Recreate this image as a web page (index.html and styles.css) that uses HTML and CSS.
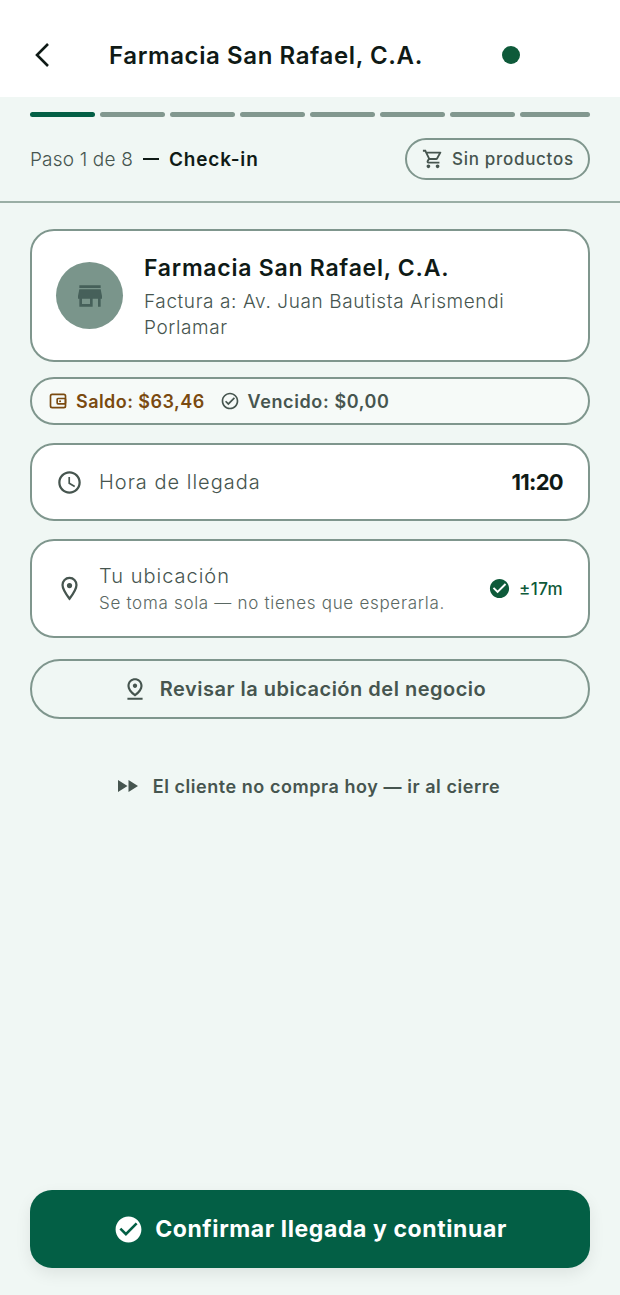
FILE: index.html
```html
<!DOCTYPE html>
<html lang="es">
<head>
    <meta charset="UTF-8">
    <meta name="viewport" content="width=device-width, initial-scale=1.0">
    <title>Check-in - Farmacia San Rafael</title>
    <link rel="stylesheet" href="styles.css">
</head>
<body>
    <div class="page">
        <header class="topbar">
            <svg class="back-icon" viewBox="0 0 18 28"><path d="M15 3 4 14l11 11" fill="none" stroke="currentColor" stroke-width="2.6"/></svg>
            <h1>Farmacia San Rafael, C.A.</h1>
            <span class="status-dot"></span>
        </header>

        <div class="progress">
            <span class="step active"></span>
            <span class="step"></span>
            <span class="step"></span>
            <span class="step"></span>
            <span class="step"></span>
            <span class="step"></span>
            <span class="step"></span>
            <span class="step"></span>
        </div>

        <div class="step-row">
            <div class="step-label">
                <span class="step-count">Paso 1 de 8</span>
                <span class="step-dash"></span>
                <strong>Check-in</strong>
            </div>
            <div class="products-pill">
                <svg viewBox="0 0 24 24"><path d="M15.55 13c.75 0 1.41-.41 1.75-1.03l3.58-6.49A.996.996 0 0 0 20.01 4H5.21l-.94-2H1v2h2l3.6 7.59-1.35 2.44C4.52 15.37 5.48 17 7 17h12v-2H7l1.1-2h7.45zM6.16 6h12.15l-2.76 5H8.53L6.16 6zM7 18c-1.1 0-1.99.9-1.99 2S5.9 22 7 22s2-.9 2-2-.9-2-2-2zm10 0c-1.1 0-1.99.9-1.99 2s.89 2 1.99 2 2-.9 2-2-.9-2-2-2z"/></svg>
                Sin productos
            </div>
        </div>

        <main class="content">
            <section class="card client-card">
                <div class="avatar">
                    <svg viewBox="0 0 24 24"><path d="M20 4H4v2h16V4zm1 10v-2l-1-5H4l-1 5v2h1v6h10v-6h4v6h2v-6h1zm-9 4H6v-4h6v4z"/></svg>
                </div>
                <div class="client-info">
                    <h2>Farmacia San Rafael, C.A.</h2>
                    <p>Factura a: Av. Juan Bautista Arismendi Porlamar</p>
                </div>
            </section>

            <section class="balance-pill">
                <span class="balance due">
                    <svg viewBox="0 0 24 24"><rect x="3" y="4" width="18" height="16" rx="2" fill="none" stroke="currentColor" stroke-width="2"/><rect x="11" y="9" width="10" height="6.5" rx="1" fill="none" stroke="currentColor" stroke-width="2"/><circle cx="14.5" cy="12.2" r="1.2"/></svg>
                    Saldo: $63,46
                </span>
                <span class="balance overdue">
                    <svg viewBox="0 0 24 24"><path d="M12 2C6.48 2 2 6.48 2 12s4.48 10 10 10 10-4.48 10-10S17.52 2 12 2zm0 18c-4.42 0-8-3.58-8-8s3.58-8 8-8 8 3.58 8 8-3.58 8-8 8zm4.59-12.42L10 14.17l-2.59-2.58L6 13l4 4 8-8z"/></svg>
                    Vencido: $0,00
                </span>
            </section>

            <section class="card time-card">
                <svg class="row-icon" viewBox="0 0 24 24"><path d="M11.99 2C6.47 2 2 6.48 2 12s4.47 10 9.99 10C17.52 22 22 17.52 22 12S17.52 2 11.99 2zM12 20c-4.42 0-8-3.58-8-8s3.58-8 8-8 8 3.58 8 8-3.58 8-8 8zm.5-13H11v6l5.25 3.15.75-1.23-4.5-2.67z"/></svg>
                <span class="row-title">Hora de llegada</span>
                <span class="time-value">11:20</span>
            </section>

            <section class="card location-card">
                <svg class="row-icon" viewBox="0 0 24 24"><path d="M12 2.6c-3.6 0-6.2 2.7-6.2 6.3 0 3.6 3 8 6.2 12.2 3.2-4.2 6.2-8.6 6.2-12.2 0-3.6-2.600-6.300-6.200-6.300z" fill="none" stroke="currentColor" stroke-width="2"/><circle cx="12" cy="9.4" r="2.3"/></svg>
                <div class="location-text">
                    <span class="row-title">Tu ubicación</span>
                    <span class="row-note">Se toma sola — no tienes que esperarla.</span>
                </div>
                <span class="accuracy">
                    <svg viewBox="0 0 24 24"><path d="M12 2C6.48 2 2 6.48 2 12s4.48 10 10 10 10-4.48 10-10S17.52 2 12 2zm-2 15-5-5 1.41-1.41L10 14.17l7.59-7.59L19 8l-9 9z"/></svg>
                    ±17m
                </span>
            </section>

            <button class="review-btn">
                <svg viewBox="0 0 24 24"><path d="M12 4c1.93 0 5 1.4 5 5.15 0 2.16-1.72 4.67-5 7.32-3.28-2.65-5-5.17-5-7.32C7 5.4 10.07 4 12 4m0-2C8.73 2 5 4.46 5 9.15c0 3.12 2.33 6.41 7 9.85 4.67-3.44 7-6.73 7-9.85C19 4.46 15.27 2 12 2zm0 5c-1.1 0-2 .9-2 2s.9 2 2 2 2-.9 2-2-.9-2-2-2zm7 13H5v2h14v-2z"/></svg>
                Revisar la ubicación del negocio
            </button>

            <a class="skip-link" href="#">
                <svg viewBox="0 0 24 24"><path d="M2 18l9.5-6L2 6v12zm10.5-12v12l9.5-6-9.5-6z"/></svg>
                El cliente no compra hoy — ir al cierre
            </a>

            <button class="confirm-btn">
                <svg viewBox="0 0 24 24"><path d="M12 2C6.48 2 2 6.48 2 12s4.48 10 10 10 10-4.48 10-10S17.52 2 12 2zm-2 15-5-5 1.41-1.41L10 14.17l7.59-7.59L19 8l-9 9z"/></svg>
                Confirmar llegada y continuar
            </button>
        </main>
    </div>
</body>
</html>
```

FILE: styles.css
```css
* {
    box-sizing: border-box;
}

body {
    font-family: 'Inter', 'Liberation Sans', sans-serif;
    background-color: #f0f7f4;
    color: #0f1a16;
    margin: 0;
}

svg {
    fill: currentColor;
    flex-shrink: 0;
}

.page {
    display: flex;
    flex-direction: column;
    min-height: 1295px;
}

.topbar {
    background-color: white;
    height: 97px;
    padding: 13px 0 0 33px;
    display: flex;
    align-items: center;
}

.back-icon {
    width: 18px;
    height: 28px;
}

.topbar h1 {
    font-size: 24px;
    font-weight: 600;
    letter-spacing: 0.6px;
    margin: 0 0 0 58px;
    width: 393px;
}

.status-dot {
    width: 18px;
    height: 18px;
    border-radius: 50%;
    background-color: #0e5a3a;
}

.progress {
    display: flex;
    gap: 5px;
    padding: 15px 30px 0;
}

.step {
    width: 65px;
    height: 5px;
    border-radius: 3px;
    background-color: #82988f;
}

.step:last-child {
    flex: 1;
}

.step.active {
    background-color: #035f45;
}

.step-row {
    display: flex;
    justify-content: space-between;
    align-items: center;
    margin-top: 21px;
    padding: 0 30px 21px;
    border-bottom: 2px solid #9aaea5;
}

.step-label {
    display: flex;
    align-items: center;
    font-size: 19px;
}

.step-count {
    color: #46554f;
    font-weight: 300;
    letter-spacing: 0.18px;
}

.step-dash {
    width: 16px;
    height: 2px;
    background-color: #0f1a16;
    margin: 0 10px;
}

.step-label strong {
    font-weight: 600;
    letter-spacing: 0.8px;
}

.products-pill {
    display: flex;
    align-items: center;
    gap: 8px;
    width: 185px;
    height: 42px;
    padding-left: 15px;
    border: 2px solid #7f968d;
    border-radius: 21px;
    color: #46554f;
    font-size: 17px;
    font-weight: 500;
    letter-spacing: 0.7px;
}

.products-pill svg {
    width: 22px;
    height: 22px;
}

.content {
    flex: 1;
    display: flex;
    flex-direction: column;
    padding: 26px 30px 27px;
}

.card {
    background-color: white;
    border: 2px solid #7f968d;
    border-radius: 24px;
    display: flex;
    align-items: center;
}

.client-card {
    height: 133px;
    padding: 0 24px;
    gap: 21px;
}

.avatar {
    width: 67px;
    height: 67px;
    border-radius: 50%;
    background-color: #7a958b;
    color: #46605a;
    display: flex;
    align-items: center;
    justify-content: center;
    flex-shrink: 0;
}

.avatar svg {
    width: 32px;
    height: 32px;
}

.client-info {
    padding-top: 3px;
}

.client-info h2 {
    font-size: 23px;
    font-weight: 600;
    letter-spacing: 0.75px;
    margin: 0 0 7px;
}

.client-info p {
    font-size: 19px;
    line-height: 26px;
    letter-spacing: 0.6px;
    color: #46554f;
    margin: 0;
    font-weight: 300;
    width: 380px;
}

.balance-pill {
    display: flex;
    align-items: center;
    gap: 15px;
    height: 48px;
    margin-top: 15px;
    padding: 0 16px;
    background-color: #f6faf8;
    border: 2px solid #7f968d;
    border-radius: 24px;
    font-size: 18px;
    font-weight: 600;
}

.balance {
    display: flex;
    align-items: center;
    gap: 8px;
    letter-spacing: 0.45px;
}

.balance svg {
    width: 20px;
    height: 20px;
}

.balance.due {
    color: #7a4a10;
}

.balance.overdue {
    color: #46554f;
    letter-spacing: 0.6px;
}

.time-card {
    height: 78px;
    margin-top: 18px;
    padding: 0 25px 0 24px;
}

.row-icon {
    width: 27px;
    height: 27px;
    color: #46554f;
}

.row-title {
    font-size: 20px;
    font-weight: 300;
    letter-spacing: 1px;
    color: #46554f;
}

.time-card .row-title {
    flex: 1;
    margin-left: 16px;
}

.time-value {
    font-size: 22px;
    font-weight: 700;
    letter-spacing: -0.7px;
}

.location-card {
    height: 99px;
    margin-top: 18px;
    padding: 0 25px 0 24px;
}

.location-text {
    flex: 1;
    display: flex;
    flex-direction: column;
    gap: 5px;
    margin-left: 16px;
}

.row-note {
    font-size: 17px;
    font-weight: 300;
    letter-spacing: 0.7px;
    color: #5a6863;
}

.accuracy {
    display: flex;
    align-items: center;
    gap: 8px;
    font-size: 17px;
    font-weight: 500;
    letter-spacing: 0.4px;
    color: #0e5a3a;
}

.accuracy svg {
    width: 23px;
    height: 23px;
}

.review-btn {
    display: flex;
    align-items: center;
    justify-content: center;
    gap: 12px;
    height: 60px;
    margin-top: 21px;
    padding: 0 12px 0 0;
    background: none;
    border: 2px solid #7f968d;
    border-radius: 30px;
    font-family: inherit;
    font-size: 20px;
    font-weight: 600;
    letter-spacing: 0.5px;
    color: #46554f;
}

.review-btn svg {
    width: 26px;
    height: 26px;
}

.skip-link {
    display: flex;
    align-items: center;
    justify-content: center;
    gap: 13px;
    margin-top: 55px;
    padding-right: 4px;
    font-size: 18px;
    font-weight: 600;
    letter-spacing: 0.55px;
    color: #46554f;
    text-decoration: none;
}

.skip-link svg {
    width: 24px;
    height: 24px;
}

.confirm-btn {
    display: flex;
    align-items: center;
    justify-content: center;
    gap: 11px;
    height: 78px;
    margin-top: auto;
    background-color: #035f45;
    border: none;
    border-radius: 22px;
    box-shadow: 0 6px 16px rgba(0, 0, 0, 0.08);
    font-family: inherit;
    font-size: 23px;
    font-weight: 700;
    letter-spacing: 0.6px;
    color: white;
}

.confirm-btn svg {
    width: 31px;
    height: 31px;
}
```
